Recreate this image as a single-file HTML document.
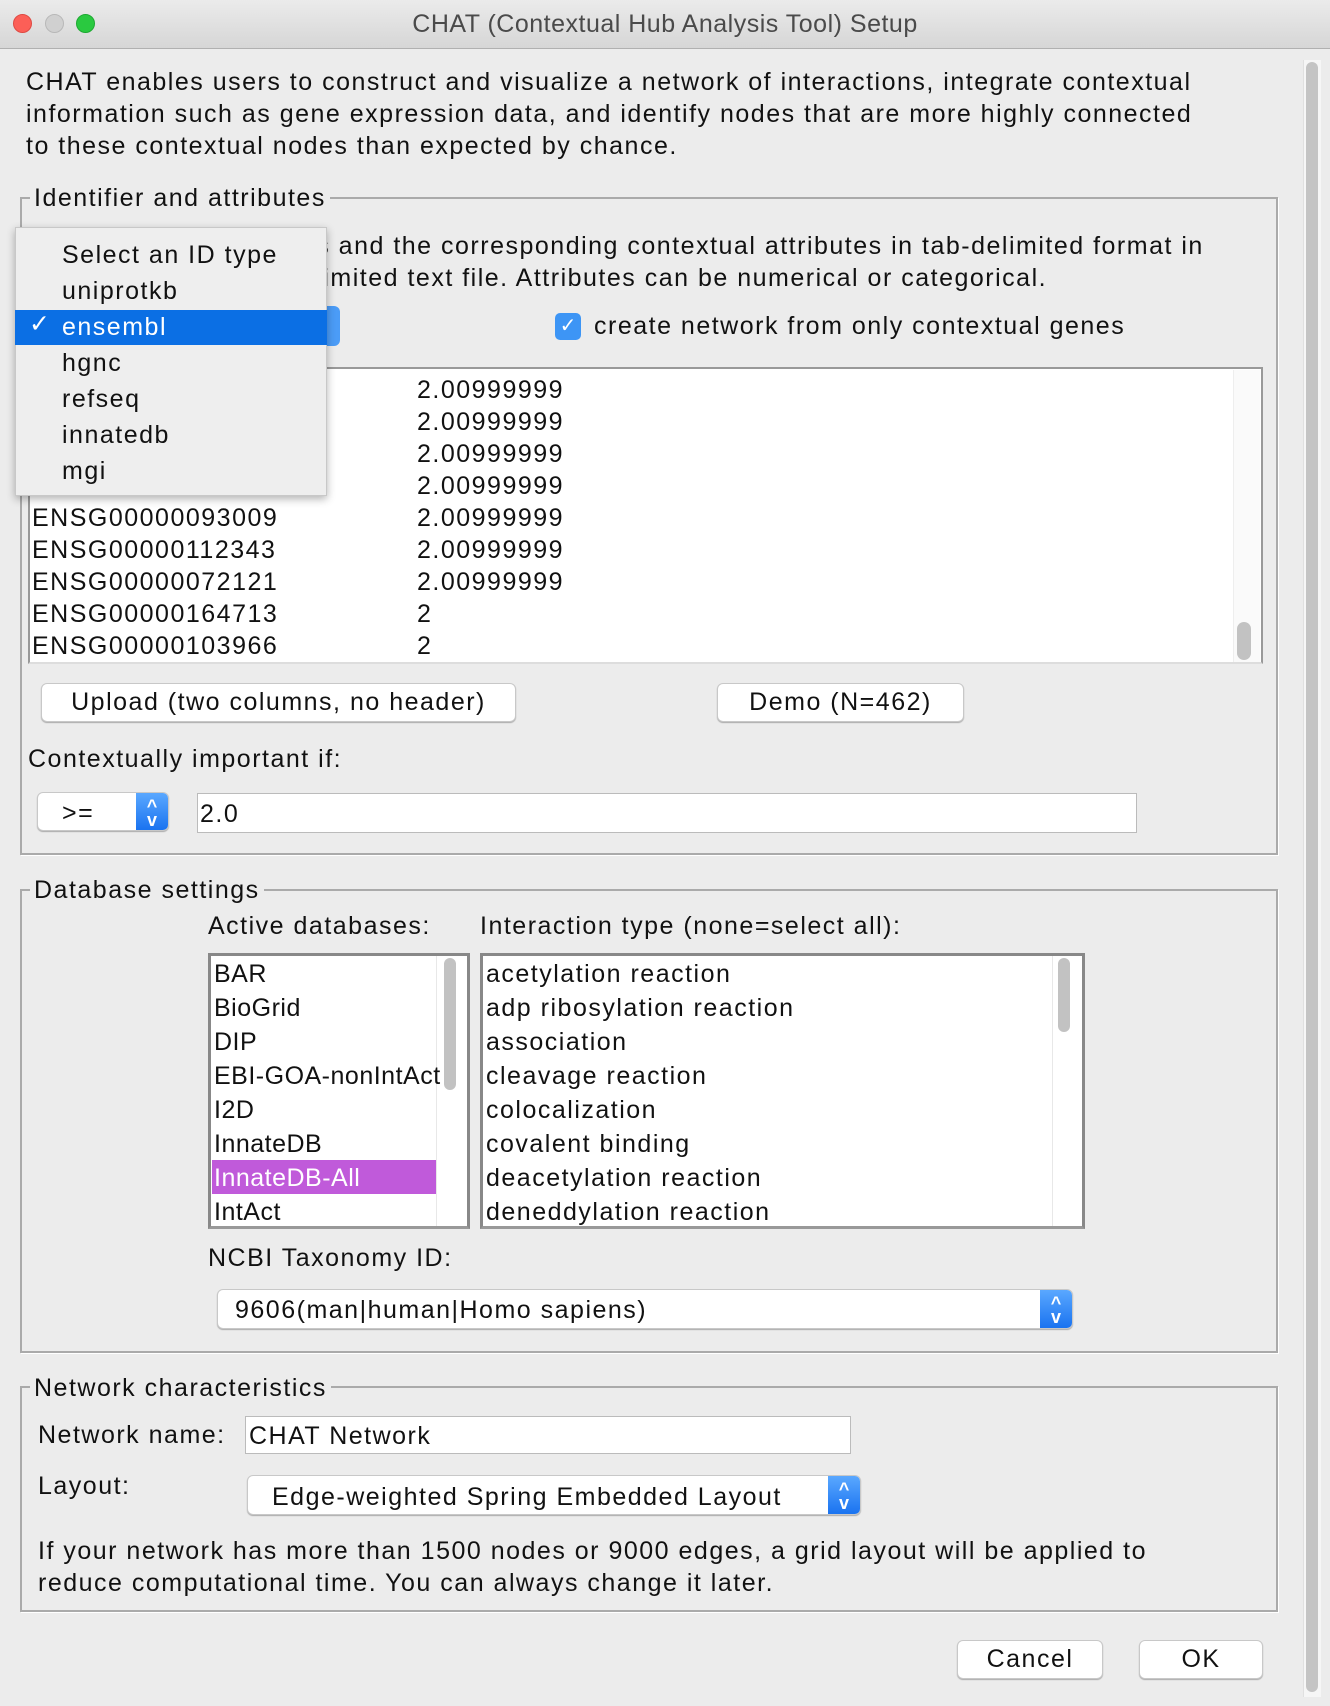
<!DOCTYPE html>
<html><head><meta charset="utf-8"><style>
*{box-sizing:border-box;margin:0;padding:0}
body{width:1330px;height:1706px;background:#ececec;font-family:"Liberation Sans",sans-serif;font-size:25px;letter-spacing:1.5px;color:#111;position:relative;overflow:hidden}
.a{position:absolute;white-space:nowrap}
.grp{position:absolute;border:2px solid #aaa;box-shadow:1px 1px 0 #fff}
.gt{position:absolute;background:#ececec;padding:0 4px;line-height:28px}
.btn{position:absolute;background:#fff;border:1px solid #c8c8c8;border-radius:6px;box-shadow:0 1px 1px #aaa;text-align:center}
.fld{position:absolute;background:#fff;border:1px solid #bbb}
.combo{position:absolute;background:#fff;border:1px solid #c8c8c8;border-radius:6px;box-shadow:0 1px 1px #aaa;overflow:hidden}
.arr{position:absolute;right:0;top:0;bottom:0;width:32px;background:linear-gradient(#5aa8ff,#1a73f0);color:#fff;font-size:18px;letter-spacing:0;line-height:14px;text-align:center;padding-top:6px;font-weight:bold}
.list{position:absolute;background:#fff;border:3px solid #888;border-bottom-color:#999}
</style></head><body>
<div class="a" style="left:0;top:0;width:1330px;height:49px;background:linear-gradient(#ebebeb,#d6d6d6);border-bottom:1px solid #b0b0b0"></div>
<div class="a" style="left:13px;top:14px;width:19px;height:19px;border-radius:50%;background:#fc5f57;border:1px solid #de4a43"></div>
<div class="a" style="left:45px;top:14px;width:19px;height:19px;border-radius:50%;background:#d0d0d0;border:1px solid #b8b8b8"></div>
<div class="a" style="left:76px;top:14px;width:19px;height:19px;border-radius:50%;background:#2ac940;border:1px solid #1ea932"></div>
<div class="a" style="left:0;width:1330px;top:10px;text-align:center;color:#4a4a4a;font-size:25px;letter-spacing:0.5px">CHAT (Contextual Hub Analysis Tool) Setup</div>
<div class="a" style="left:1303px;top:60px;width:18px;height:1637px;background:#f6f6f6;border-left:1px solid #e0e0e0"></div>
<div class="a" style="left:1306px;top:62px;width:12px;height:1630px;background:#c4c4c4;border-radius:6px"></div>

<div class="a" style="left:26px;top:66px;line-height:32px">CHAT enables users to construct and visualize a network of interactions, integrate contextual<br>information such as gene expression data, and identify nodes that are more highly connected<br>to these contextual nodes than expected by chance.</div>

<div class="grp" style="left:20px;top:197px;width:1258px;height:658px"></div>
<div class="gt" style="left:30px;top:184px">Identifier and attributes</div>
<div class="a" style="left:40px;top:230px;line-height:32px">Upload gene identifiers and the corresponding contextual attributes in tab-delimited format in<br>either a .csv or tab-delimited text file. Attributes can be numerical or categorical.</div>
<div class="a" style="left:555px;top:313px;width:26px;height:27px;border-radius:5px;background:#3d95f5;color:#fff;font-size:20px;text-align:center;line-height:27px;letter-spacing:0">✓</div>
<div class="a" style="left:594px;top:312px">create network from only contextual genes</div>
<div class="a" style="left:28px;top:367px;width:1235px;height:297px;background:#fff;border:2px solid #999;border-bottom-color:#ddd"></div>
<div class="a" style="left:1233px;top:370px;width:27px;height:292px;border-left:1px solid #eee;background:#fafafa"></div>
<div class="a" style="left:1237px;top:622px;width:14px;height:38px;border-radius:7px;background:#c2c2c2"></div>
<div class="a" style="left:32px;top:374px;line-height:32px">ENSG00000000000<br>ENSG00000000000<br>ENSG00000000000<br>ENSG00000000000<br>ENSG00000093009<br>ENSG00000112343<br>ENSG00000072121<br>ENSG00000164713<br>ENSG00000103966</div>
<div class="a" style="left:417px;top:374px;line-height:32px">2.00999999<br>2.00999999<br>2.00999999<br>2.00999999<br>2.00999999<br>2.00999999<br>2.00999999<br>2<br>2</div>
<div class="a" style="left:300px;top:306px;width:40px;height:40px;border-radius:6px;background:#4b9cf7"></div>
<div class="a" style="left:15px;top:227px;width:312px;height:269px;background:#eeeeee;border:1px solid #c8c8c8;box-shadow:0 3px 8px rgba(0,0,0,.3)"></div>
<div class="a" style="left:15px;top:310px;width:312px;height:35px;background:#0b6fe4"></div>
<div class="a" style="left:29px;top:309px;color:#fff">✓</div>
<div class="a" style="left:62px;top:237px;line-height:36px">Select an ID type<br>uniprotkb<br><span style="color:#fff">ensembl</span><br>hgnc<br>refseq<br>innatedb<br>mgi</div>
<div class="btn" style="left:41px;top:683px;width:475px;height:39px;line-height:37px">Upload (two columns, no header)</div>
<div class="btn" style="left:717px;top:683px;width:247px;height:39px;line-height:37px">Demo (N=462)</div>
<div class="a" style="left:28px;top:745px">Contextually important if:</div>
<div class="combo" style="left:37px;top:792px;width:132px;height:39px"><span class="a" style="left:24px;top:6px">&gt;=</span><div class="arr">^<br>v</div></div>
<div class="fld" style="left:197px;top:793px;width:940px;height:40px"><span class="a" style="left:2px;top:6px">2.0</span></div>

<div class="grp" style="left:20px;top:889px;width:1258px;height:464px"></div>
<div class="gt" style="left:30px;top:876px">Database settings</div>
<div class="a" style="left:208px;top:912px">Active databases:</div>
<div class="a" style="left:480px;top:912px">Interaction type (none=select all):</div>
<div class="list" style="left:208px;top:953px;width:262px;height:276px"></div>
<div class="a" style="left:436px;top:956px;width:1px;height:270px;background:#e8e8e8"></div>
<div class="a" style="left:444px;top:958px;width:12px;height:132px;border-radius:6px;background:#c2c2c2"></div>
<div class="a" style="left:212px;top:1160px;width:224px;height:34px;background:#c05ada"></div>
<div class="a" style="left:214px;top:957px;line-height:34px;letter-spacing:0.5px">BAR<br>BioGrid<br>DIP<br>EBI-GOA-nonIntAct<br>I2D<br>InnateDB<br><span style="color:#fff">InnateDB-All</span><br>IntAct</div>
<div class="list" style="left:480px;top:953px;width:605px;height:276px"></div>
<div class="a" style="left:1052px;top:956px;width:1px;height:270px;background:#e8e8e8"></div>
<div class="a" style="left:1058px;top:958px;width:12px;height:74px;border-radius:6px;background:#c2c2c2"></div>
<div class="a" style="left:486px;top:957px;line-height:34px">acetylation reaction<br>adp ribosylation reaction<br>association<br>cleavage reaction<br>colocalization<br>covalent binding<br>deacetylation reaction<br>deneddylation reaction</div>
<div class="a" style="left:208px;top:1244px">NCBI Taxonomy ID:</div>
<div class="combo" style="left:217px;top:1289px;width:856px;height:40px"><span class="a" style="left:17px;top:6px">9606(man|human|Homo sapiens)</span><div class="arr">^<br>v</div></div>

<div class="grp" style="left:20px;top:1386px;width:1258px;height:226px"></div>
<div class="gt" style="left:30px;top:1374px">Network characteristics</div>
<div class="a" style="left:38px;top:1421px">Network name:</div>
<div class="fld" style="left:245px;top:1416px;width:606px;height:38px"><span class="a" style="left:3px;top:5px">CHAT Network</span></div>
<div class="a" style="left:38px;top:1472px">Layout:</div>
<div class="combo" style="left:247px;top:1475px;width:614px;height:40px"><span class="a" style="left:24px;top:7px">Edge-weighted Spring Embedded Layout</span><div class="arr">^<br>v</div></div>
<div class="a" style="left:38px;top:1535px;line-height:32px">If your network has more than 1500 nodes or 9000 edges, a grid layout will be applied to<br>reduce computational time. You can always change it later.</div>
<div class="btn" style="left:957px;top:1640px;width:146px;height:39px;line-height:37px">Cancel</div>
<div class="btn" style="left:1139px;top:1640px;width:124px;height:39px;line-height:37px">OK</div>
</body></html>
